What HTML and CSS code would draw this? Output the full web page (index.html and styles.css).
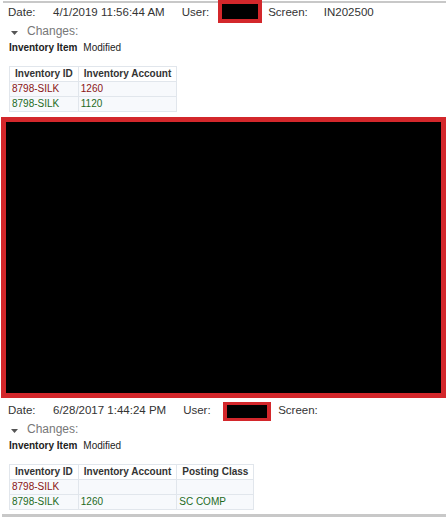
FILE: index.html
```html
<!DOCTYPE html>
<html>
<head>
<meta charset="utf-8">
<link rel="stylesheet" href="styles.css">
</head>
<body>
<section class="entry entry-first">
  <div class="meta">
    <span class="label label-date">Date:</span>
    <span class="value value-date">4/1/2019 11:56:44 AM</span>
    <span class="label">User:</span>
    <span class="redact redact-a"></span>
    <span class="label label-screen">Screen:</span>
    <span class="value">IN202500</span>
  </div>
  <div class="changes">
    <svg class="caret" width="7" height="4" viewBox="0 0 7 4"><path d="M0 0H7L3.5 4Z" fill="#555"/></svg>
    <span>Changes:</span>
  </div>
  <div class="item"><b>Inventory Item</b><span>Modified</span></div>
  <table class="diff">
    <tr><th>Inventory ID</th><th>Inventory Account</th></tr>
    <tr class="old"><td>8798-SILK</td><td>1260</td></tr>
    <tr class="new"><td>8798-SILK</td><td>1120</td></tr>
  </table>
</section>
<div class="redact-block"></div>
<section class="entry entry-last">
  <div class="meta">
    <span class="label label-date">Date:</span>
    <span class="value value-date">6/28/2017 1:44:24 PM</span>
    <span class="label">User:</span>
    <span class="redact redact-b"></span>
    <span class="label label-screen">Screen:</span>
  </div>
  <div class="changes">
    <svg class="caret" width="7" height="4" viewBox="0 0 7 4"><path d="M0 0H7L3.5 4Z" fill="#555"/></svg>
    <span>Changes:</span>
  </div>
  <div class="item"><b>Inventory Item</b><span>Modified</span></div>
  <table class="diff">
    <tr><th>Inventory ID</th><th>Inventory Account</th><th>Posting Class</th></tr>
    <tr class="old"><td>8798-SILK</td><td></td><td></td></tr>
    <tr class="new"><td>8798-SILK</td><td>1260</td><td>SC COMP</td></tr>
  </table>
</section>
</body>
</html>
```
FILE: styles.css
```css
html, body {
  margin: 0;
  padding: 0;
  background: #fff;
}
body {
  font-family: "Liberation Sans", Arial, sans-serif;
  color: #333;
  width: 446px;
  height: 517px;
  overflow: hidden;
}
.entry {
  margin-left: 3px;
  padding-left: 5px;
}
.entry-first {
  margin-top: 1px;
  border-top: 2px solid #c8c8c8;
  padding-bottom: 5px;
}
.entry-last {
  margin-left: 2px;
  padding-left: 6px;
  padding-top: 3px;
  padding-bottom: 4px;
  border-bottom: 3px solid #c8c8c8;
}
.meta {
  display: flex;
  align-items: center;
  height: 17px;
  font-size: 11.5px;
  white-space: nowrap;
}
.label-date {
  width: 45px;
}
.value-date {
  margin-right: 17px;
}
.label-screen {
  margin-right: 16px;
}
.redact {
  box-sizing: border-box;
  align-self: flex-start;
  background: #000;
  border: 4px solid #d3272b;
}
.redact-a {
  width: 44px;
  height: 23px;
  margin: -3px 6px 0 9px;
}
.redact-b {
  width: 48px;
  height: 19px;
  margin: 1px 7px 0 12.5px;
  border-width: 3px 4px;
}
.changes {
  display: flex;
  align-items: center;
  height: 21px;
  font-size: 12px;
  color: #777;
}
.caret {
  margin: 4px 9px 0 3px;
}
.item {
  display: flex;
  gap: 6px;
  height: 13px;
  line-height: 13px;
  font-size: 10px;
  padding-left: 1px;
  color: #222;
}
.item b {
  font-weight: bold;
}
.diff {
  margin: 12px 0 0 1px;
  border-collapse: collapse;
  font-size: 10px;
}
.diff th,
.diff td {
  border: 1px solid #e1e6ec;
  height: 14px;
  line-height: 14px;
  padding: 0;
  white-space: nowrap;
}
.diff th {
  padding: 0 5px;
  font-weight: bold;
  color: #333;
  text-align: center;
  background: #fff;
}
.diff td {
  padding: 0 2px;
  text-align: left;
  background: #f7f9fc;
}
.old td {
  color: #8a1515;
}
.new td {
  color: #1d6b1d;
}
.redact-block {
  box-sizing: border-box;
  margin-left: 1px;
  width: 445px;
  height: 281px;
  background: #000;
  border: 5px solid #d3272b;
}
```
